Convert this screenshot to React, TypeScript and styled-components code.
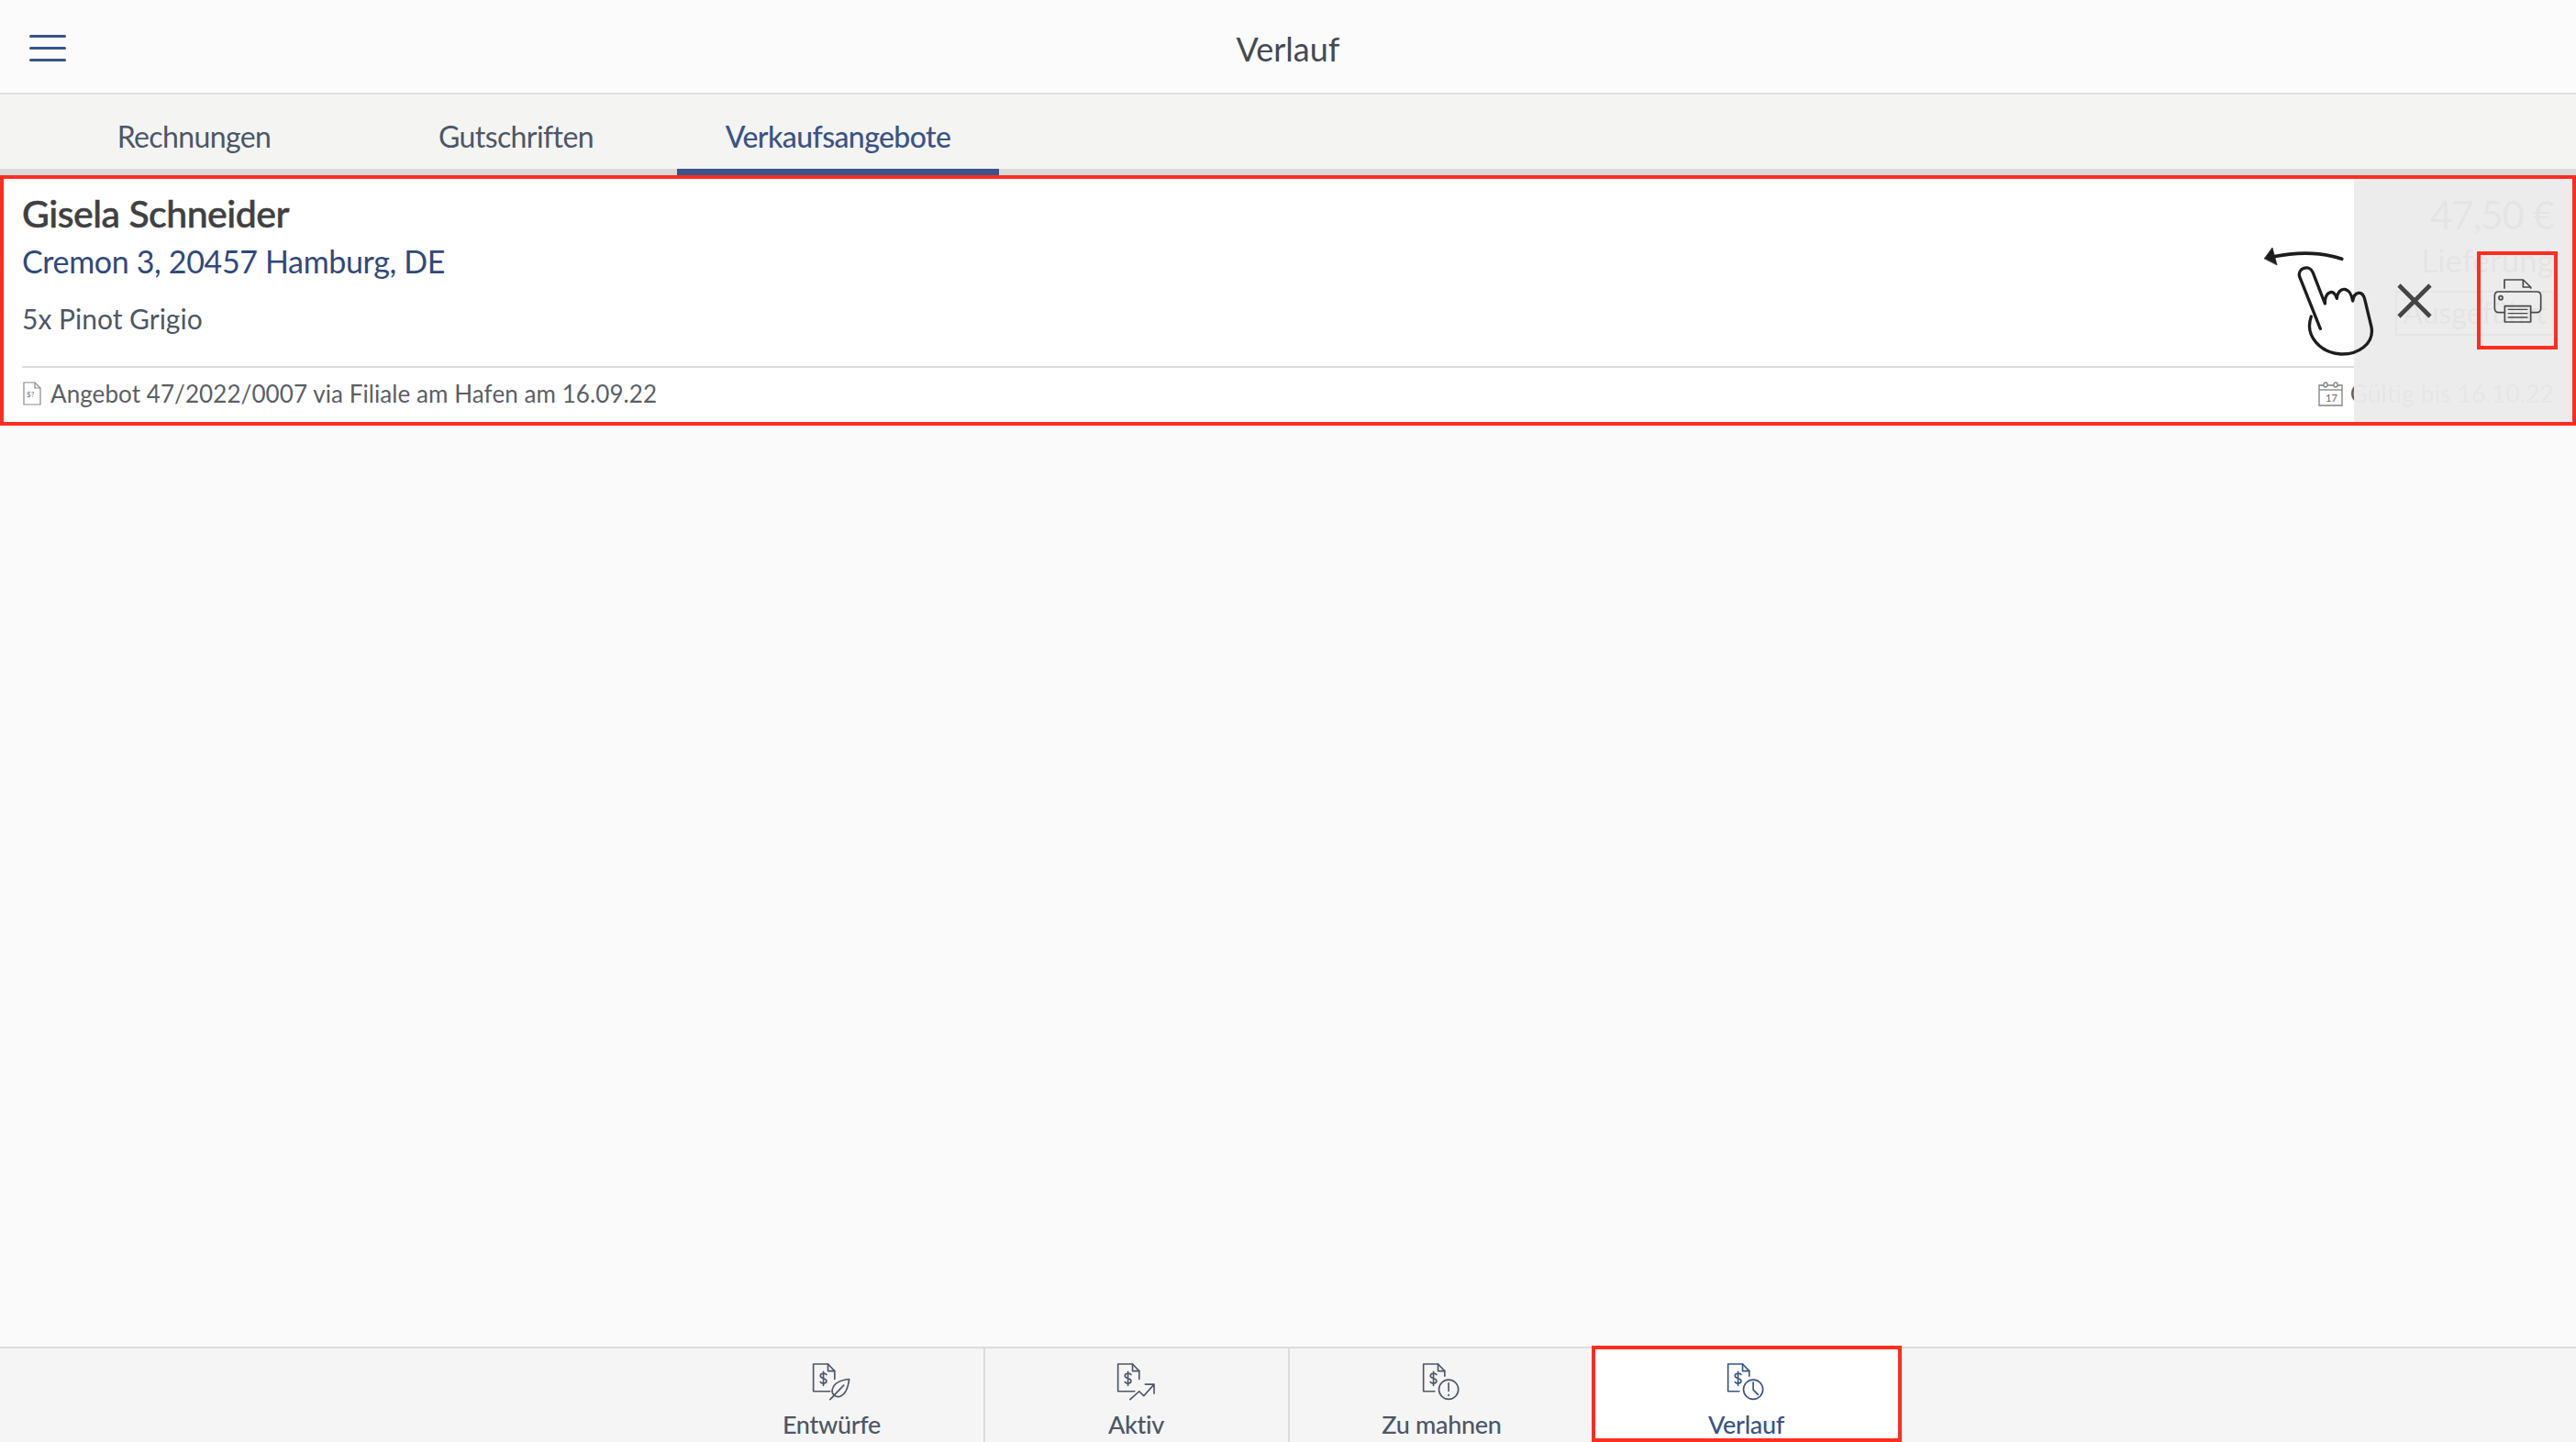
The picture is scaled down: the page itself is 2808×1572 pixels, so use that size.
import styled, { createGlobalStyle } from "styled-components";

const FONT = `Lato, "Noto Sans", "Liberation Sans", sans-serif`;
const RED = "#ff2d20";
const BLUE = "#3a5487";
const SLATE = "#4c5767";

const GlobalStyle = createGlobalStyle`
  html, body { margin: 0; padding: 0; background: #fafafa; }
  * { box-sizing: border-box; }
  body { font-family: ${FONT}; }
`;

const Page = styled.div`
  width: 2808px;
  height: 1572px;
  display: flex;
  flex-direction: column;
  overflow: hidden;
  background: #fafafa;
`;

const Header = styled.header`
  height: 103px;
  flex: none;
  display: flex;
  align-items: center;
  justify-content: center;
  position: relative;
  background: #fbfbfb;
  border-bottom: 2px solid #e0e0e0;
`;

const MenuButton = styled.div`
  position: absolute;
  left: 32px;
  top: 38px;
  width: 40px;
  height: 29px;
  display: flex;
  flex-direction: column;
  justify-content: space-between;
`;

const MenuLine = styled.span`
  display: block;
  height: 3px;
  border-radius: 2px;
  background: ${BLUE};
`;

const Title = styled.h1`
  margin: 4px 0 0;
  font-size: 36px;
  font-weight: 400;
  color: #444a52;
`;

const TabBar = styled.nav`
  height: 88px;
  flex: none;
  display: flex;
  padding-left: 36px;
  background: #f4f4f3;
  box-shadow: inset 0 -7px 0 #d9d9d9;
`;

const Tab = styled.div<{ $active?: boolean }>`
  width: 351px;
  padding-top: 26px;
  text-align: center;
  font-size: 32px;
  line-height: 40px;
  letter-spacing: -0.6px;
  font-weight: ${(p) => (p.$active ? 500 : 400)};
  color: ${(p) => (p.$active ? BLUE : SLATE)};
  border-bottom: 7px solid ${(p) => (p.$active ? BLUE : "transparent")};
`;

const Content = styled.main`
  flex: 1;
`;

const Card = styled.section`
  position: relative;
  height: 273px;
  border: 4px solid ${RED};
  background: #fff;
  padding: 0 20px;
  display: flex;
  flex-direction: column;
`;

const CardBody = styled.div`
  height: 206px;
  flex: none;
  display: flex;
  justify-content: space-between;
  border-bottom: 2px solid #dcdcdc;
`;

const Customer = styled.div`
  display: flex;
  flex-direction: column;
`;

const Name = styled.div`
  margin-top: 13px;
  font-size: 41px;
  line-height: 50px;
  font-weight: 500;
  letter-spacing: -0.5px;
  -webkit-text-stroke: 0.5px #3f4042;
  color: #3f4042;
`;

const Address = styled.div`
  margin-top: 4px;
  font-size: 34px;
  line-height: 46px;
  letter-spacing: -0.35px;
  color: #30497c;
`;

const Items = styled.div`
  margin-top: 17px;
  font-size: 30px;
  line-height: 44px;
  color: ${SLATE};
`;

const Summary = styled.div`
  display: flex;
  flex-direction: column;
  align-items: flex-end;
`;

const Amount = styled.div`
  margin-top: 14px;
  font-size: 42px;
  line-height: 50px;
  letter-spacing: -1px;
  color: #444;
`;

const Delivery = styled.div`
  font-size: 35px;
  line-height: 48px;
  color: #444;
`;

const Status = styled.div`
  margin-top: 10px;
  width: 173px;
  height: 49px;
  border: 2px solid #555;
  text-align: center;
  font-size: 32px;
  line-height: 44px;
  color: #444;
`;

const CardFooter = styled.div`
  flex: 1;
  display: flex;
  align-items: center;
  justify-content: space-between;
  padding-bottom: 3px;
`;

const Meta = styled.div`
  display: flex;
  align-items: center;
  gap: 9px;
  font-size: 26px;
  line-height: 32px;
  letter-spacing: 0.08px;
  color: #5a5f66;
`;

const ValidUntil = styled.span`
  letter-spacing: 0.3px;
  margin-left: -1px;
`;

const SwipeActions = styled.div`
  position: absolute;
  top: 0;
  right: 0;
  bottom: 0;
  width: 238px;
  padding-right: 16px;
  display: flex;
  align-items: center;
  justify-content: flex-end;
  gap: 49px;
  background: rgba(235, 235, 235, 0.96);
`;

const CloseIcon = styled.svg`
  width: 38px;
  height: 38px;
  flex: none;
`;

const PrintButton = styled.div`
  width: 88px;
  height: 107px;
  flex: none;
  border: 4px solid ${RED};
  display: flex;
  align-items: center;
  justify-content: center;
`;

const SwipeHint = styled.svg`
  position: absolute;
  left: 2436px;
  top: 55px;
  width: 150px;
  height: 150px;
`;

const BottomNav = styled.nav`
  height: 104px;
  flex: none;
  display: flex;
  justify-content: center;
  padding-left: 3px;
  background: #f5f5f5;
  border-top: 2px solid #dcdcdc;
`;

const NavItem = styled.div<{ $active?: boolean; $divider?: boolean }>`
  position: relative;
  width: 332px;
  display: flex;
  flex-direction: column;
  align-items: center;
  padding-top: 15px;
  font-size: 27px;
  line-height: 36px;
  letter-spacing: -0.3px;
  font-weight: 500;
  color: ${(p) => (p.$active ? BLUE : SLATE)};
  border-right: ${(p) => (p.$divider ? "2px solid #dcdcdc" : "none")};
`;

const ActiveOutline = styled.div`
  position: absolute;
  left: -3px;
  right: -3px;
  top: -3px;
  bottom: 0;
  border: 4px solid ${RED};
  background: #fff;
  z-index: 0;
`;

const NavIcon = styled.svg`
  width: 43px;
  height: 42px;
  flex: none;
  position: relative;
  z-index: 1;
`;

const NavLabel = styled.span`
  margin-top: 8px;
  position: relative;
  z-index: 1;
`;

function DocShape({ cut }: { cut?: boolean }) {
  return (
    <>
      <path d={cut ? "M155 85V68L133 45H85V135H122" : "M155 95V68L133 45H85V135H140"} />
      <path d="M133 45V68H155" />
      <path d="M128 80C124 74 108 74 108 84C108 94 128 90 128 101C128 111 112 111 108 104M118 70V116" />
    </>
  );
}

function NavGlyph({ children }: { children: React.ReactNode }) {
  return (
    <NavIcon
      viewBox="80 40 130 125"
      fill="none"
      stroke="currentColor"
      strokeWidth="5"
      strokeLinecap="round"
      strokeLinejoin="round"
    >
      {children}
    </NavIcon>
  );
}

function HandHint() {
  return (
    <SwipeHint viewBox="0 0 450 450" fill="none" stroke="#1d1d1d" strokeWidth="10" strokeLinecap="round" strokeLinejoin="round">
      <path d="M338 97C270 74 190 74 112 90" strokeWidth="11" />
      <path d="M85 95L111 60L126 116Z" fill="#1d1d1d" strokeWidth="2" />
      <path d="M268 325L200 155C192 128 232 112 244 142L283 243C282 205 312 190 322 226C326 185 366 185 374 234C378 205 406 195 414 232L435 320C445 375 390 410 335 408C270 404 215 350 238 285" />
    </SwipeHint>
  );
}

export default function App() {
  return (
    <Page>
      <GlobalStyle />
      <Header>
        <MenuButton>
          <MenuLine />
          <MenuLine />
          <MenuLine />
        </MenuButton>
        <Title>Verlauf</Title>
      </Header>
      <TabBar>
        <Tab>Rechnungen</Tab>
        <Tab>Gutschriften</Tab>
        <Tab $active>Verkaufsangebote</Tab>
      </TabBar>
      <Content>
        <Card>
          <CardBody>
            <Customer>
              <Name>Gisela Schneider</Name>
              <Address>Cremon 3, 20457 Hamburg, DE</Address>
              <Items>5x Pinot Grigio</Items>
            </Customer>
            <Summary>
              <Amount>47,50 €</Amount>
              <Delivery>Lieferung</Delivery>
              <Status>Ausgeführt</Status>
            </Summary>
          </CardBody>
          <CardFooter>
            <Meta>
              <svg width="22" height="26" viewBox="0 0 22 26" fill="none" stroke="#8a8a8a" strokeWidth="1.2">
                <path d="M2 1H14L20 7V25H2Z" />
                <path d="M14 1V7H20" />
                <text x="5" y="17" fontSize="8" fill="#777" stroke="none">$?</text>
              </svg>
              <span>Angebot 47/2022/0007 via Filiale am Hafen am 16.09.22</span>
            </Meta>
            <Meta>
              <svg width="27" height="27" viewBox="0 0 27 27" fill="none" stroke="#808080" strokeWidth="1.3">
                <path d="M1 4H26V26H1Z" />
                <path d="M1 9H26" />
                <rect x="6" y="1" width="4" height="5" rx="2" fill="#fff" />
                <rect x="17" y="1" width="4" height="5" rx="2" fill="#fff" />
                <text x="8" y="22" fontSize="11" fill="#666" stroke="none">17</text>
              </svg>
              <ValidUntil>Gültig bis 16.10.22</ValidUntil>
            </Meta>
          </CardFooter>
          <SwipeActions>
            <CloseIcon viewBox="0 0 38 38" stroke="#444" strokeWidth="4.6">
              <path d="M2 2L36 36M36 2L2 36" />
            </CloseIcon>
            <PrintButton>
              <svg width="55" height="50" viewBox="950 370 165 150" fill="none" stroke="#484848" strokeWidth="5" strokeLinejoin="round">
                <path d="M989 405V376H1050L1075 400V405" />
                <path d="M1050 376V400H1075" />
                <path d="M989 483H970C962 483 957 477 957 470V428C957 420 962 415 970 415H1095C1103 415 1108 420 1108 428V470C1108 477 1103 483 1095 483H1076" />
                <rect x="990" y="462" width="85" height="52" />
                <path d="M1000 473H1065M1000 486H1065M1000 499H1065" strokeWidth="4" />
                <circle cx="977" cy="435" r="6" />
              </svg>
            </PrintButton>
          </SwipeActions>
          <HandHint />
        </Card>
      </Content>
      <BottomNav>
        <NavItem $divider>
          <NavGlyph>
            <DocShape />
            <path d="M140 162L185 115" />
            <path d="M203 95C175 98 152 108 147 130C145 145 158 156 172 152C192 145 200 120 203 95Z" />
          </NavGlyph>
          <NavLabel>Entwürfe</NavLabel>
        </NavItem>
        <NavItem $divider>
          <NavGlyph>
            <DocShape />
            <path d="M125 162L155 135L170 150L204 112M175 112H204V142" />
          </NavGlyph>
          <NavLabel>Aktiv</NavLabel>
        </NavItem>
        <NavItem>
          <NavGlyph>
            <DocShape cut />
            <circle cx="168" cy="129" r="32" />
            <path d="M168 108V134M168 146V149" />
          </NavGlyph>
          <NavLabel>Zu mahnen</NavLabel>
        </NavItem>
        <NavItem $active>
          <ActiveOutline />
          <NavGlyph>
            <DocShape cut />
            <circle cx="168" cy="129" r="32" />
            <path d="M168 105V130L184 146" />
          </NavGlyph>
          <NavLabel>Verlauf</NavLabel>
        </NavItem>
      </BottomNav>
    </Page>
  );
}
